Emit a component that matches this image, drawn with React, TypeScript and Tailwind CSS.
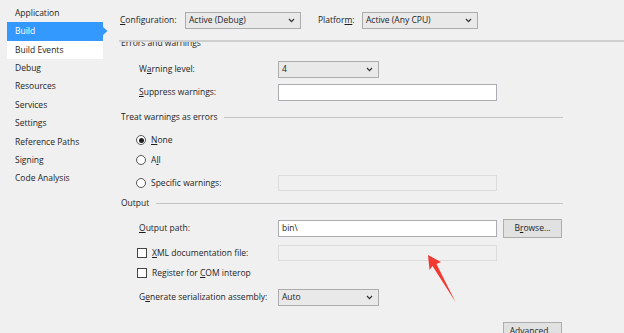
import React from 'react';

const navItems = [
  'Application',
  'Build',
  'Build Events',
  'Debug',
  'Resources',
  'Services',
  'Settings',
  'Reference Paths',
  'Signing',
  'Code Analysis',
];

function Chevron() {
  return (
    <svg width="7" height="5" viewBox="0 0 7 5" className="shrink-0">
      <path d="M1 1 L3.5 3.6 L6 1" fill="none" stroke="#333" strokeWidth="1.2" />
    </svg>
  );
}

function Select({ value, width }: { value: string; width: string }) {
  return (
    <div
      className={`${width} flex h-[17px] items-center justify-between border border-[#acacac] bg-[#e9e9e9] pl-[3px] pr-[5px]`}
    >
      <span>{value}</span>
      <Chevron />
    </div>
  );
}

function TextBox({ value, disabled }: { value?: string; disabled?: boolean }) {
  return (
    <div
      className={
        disabled
          ? 'h-[16px] w-[219px] border border-[#dcdcdc] bg-[#f0f0f0]'
          : 'flex h-[17px] w-[219px] items-center border border-[#abadb3] bg-white pl-[3px]'
      }
    >
      {value}
    </div>
  );
}

function Button({ children }: { children: React.ReactNode }) {
  return (
    <div className="flex h-[19px] w-[59px] items-center justify-center border border-[#adadad] bg-[#e1e1e1]">
      {children}
    </div>
  );
}

function GroupHeading({ title, className, line = true }: { title: string; className?: string; line?: boolean }) {
  return (
    <div className={`flex h-[14px] items-center gap-[7px] ${className ?? ''}`}>
      <span className="whitespace-nowrap">{title}</span>
      {line && <div className="h-[1px] flex-1 bg-[#c4c4c4]" />}
    </div>
  );
}

function Radio({ checked }: { checked?: boolean }) {
  return (
    <div className="flex h-[10px] w-[10px] items-center justify-center rounded-full border border-[#555] bg-white">
      {checked && <div className="h-[5px] w-[5px] rounded-full bg-[#1e1e1e]" />}
    </div>
  );
}

function Checkbox() {
  return <div className="h-[10px] w-[10px] border border-[#444] bg-white" />;
}

export default function App() {
  return (
    <div
      className="relative flex h-[333px] w-[624px] overflow-hidden bg-[#f0f0f0] text-[8.5px] text-[#1e1e1e]"
      style={{ fontFamily: '"Open Sans", "Noto Sans", sans-serif' }}
    >
      {/* sidebar */}
      <div className="w-[108px] shrink-0 pt-[4px]">
        {navItems.map((item) => {
          if (item === 'Build') {
            return (
              <div key={item} className="relative ml-[7px] flex h-[18.4px] w-[96px] items-center bg-[#3399ff] pl-[8px] text-white">
                {item}
                <svg width="6" height="10" viewBox="0 0 6 10" className="absolute right-[-5px] top-[4px]">
                  <path d="M0 0 L5.5 5 L0 10 Z" fill="#3399ff" />
                </svg>
              </div>
            );
          }
          if (item === 'Build Events') {
            return (
              <div key={item} className="ml-[7px] flex h-[18.4px] w-[96px] items-center bg-white pl-[8px]">
                {item}
              </div>
            );
          }
          return (
            <div key={item} className="flex h-[18.4px] items-center pl-[15px]">
              {item}
            </div>
          );
        })}
      </div>

      {/* main */}
      <div className="flex flex-1 flex-col">
        <div className="flex h-[40px] items-center pl-[12px] pt-[1px]">
          <span className="w-[65px]">
            <u>C</u>onfiguration:
          </span>
          <Select value="Active (Debug)" width="w-[116px]" />
          <span className="ml-[17px] w-[44px]">
            Platfor<u>m</u>:
          </span>
          <Select value="Active (Any CPU)" width="w-[116px]" />
        </div>
        <div className="ml-[11px] h-[2px] bg-[#cfcfcf]" />

        <div className="flex-1 overflow-hidden">
          <div className="w-[455px] pl-[13px]">
            <GroupHeading title="Errors and warnings" className="mt-[-6px]" line={false} />

            <div className="mt-[11px] flex h-[17px] items-center pl-[18px]">
              <span className="w-[139px]">
                W<u>a</u>rning level:
              </span>
              <Select value="4" width="w-[101px]" />
            </div>
            <div className="mt-[6px] flex h-[17px] items-center pl-[18px]">
              <span className="w-[139px]">
                <u>S</u>uppress warnings:
              </span>
              <TextBox />
            </div>

            <GroupHeading title="Treat warnings as errors" className="mt-[9px]" />
            <div className="mt-[9px] flex h-[14px] items-center gap-[5px] pl-[15px]">
              <Radio checked />
              <span>
                <u>N</u>one
              </span>
            </div>
            <div className="mt-[6px] flex h-[14px] items-center gap-[5px] pl-[15px]">
              <Radio />
              <span>
                A<u>l</u>l
              </span>
            </div>
            <div className="mt-[8px] flex h-[16px] items-center pl-[15px]">
              <Radio />
              <span className="ml-[5px] w-[127px]">
                Specif<u>i</u>c warnings:
              </span>
              <TextBox disabled />
            </div>

            <GroupHeading title="Output" className="mt-[5px]" />
            <div className="mt-[9px] flex h-[19px] items-center pl-[18px]">
              <span className="w-[139px]">
                <u>O</u>utput path:
              </span>
              <TextBox value="bin\" />
              <div className="ml-[6px]">
                <Button>
                  B<u>r</u>owse...
                </Button>
              </div>
            </div>
            <div className="mt-[7px] flex h-[16px] items-center pl-[16px]">
              <Checkbox />
              <span className="ml-[5px] w-[126px]">
                <u>X</u>ML documentation file:
              </span>
              <TextBox disabled />
            </div>
            <div className="mt-[5px] flex h-[14px] items-center gap-[5px] pl-[16px]">
              <Checkbox />
              <span>
                Register for <u>C</u>OM interop
              </span>
            </div>
            <div className="mt-[9px] flex h-[17px] items-center pl-[18px]">
              <span className="w-[139px]">
                G<u>e</u>nerate serialization assembly:
              </span>
              <Select value="Auto" width="w-[101px]" />
            </div>
            <div className="mt-[16px] flex justify-end pr-[1px]">
              <Button>
                A<u>d</u>vanced...
              </Button>
            </div>
          </div>
        </div>
      </div>

      {/* red annotation arrow */}
      <svg width="624" height="333" className="pointer-events-none absolute left-0 top-0">
        <path d="M428 255 L441 262 L436.5 264 L455.5 302 L432.5 266 L429.5 270 Z" fill="#f03a32" />
      </svg>
    </div>
  );
}
